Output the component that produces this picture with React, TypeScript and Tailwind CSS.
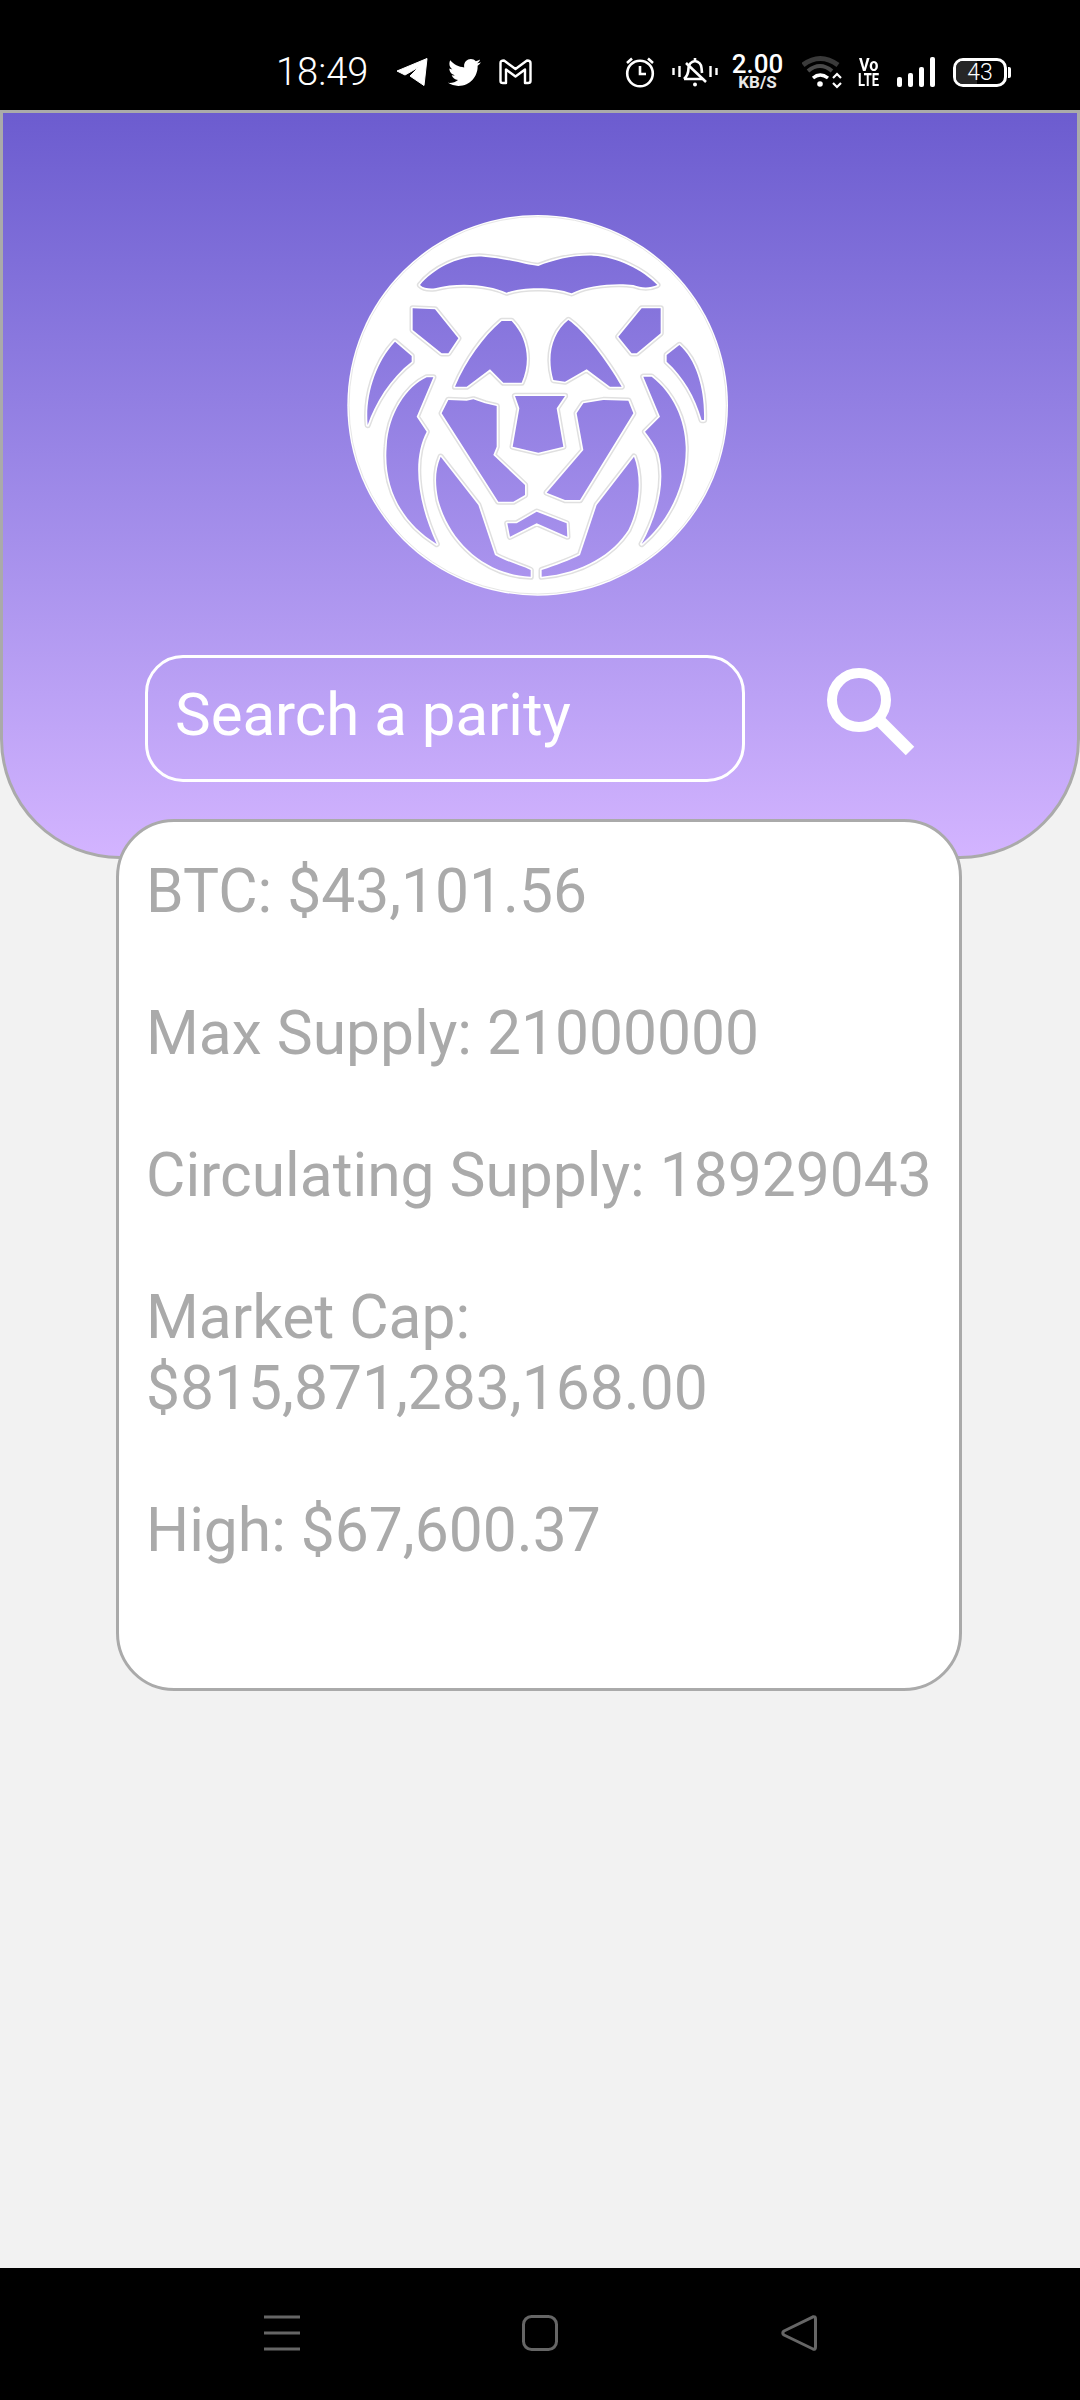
import { FaTwitter } from "react-icons/fa";

const LOGO_HOLES = [
  // brow
  "M300 285 C340 235 420 195 490 200 C560 205 620 225 655 228 C700 210 760 195 820 197 C890 200 970 240 1012 285 C990 295 965 295 940 285 C890 278 800 285 755 310 C700 290 610 290 560 308 C510 285 420 275 345 295 C330 297 310 295 300 285Z",
  // upper ears
  "M278 355 L345 358 L415 445 L385 490 L365 490 L278 420Z",
  "M1022 355 L965 355 L895 440 L935 490 L950 490 L1022 430Z",
  // outer mane
  "M225 455 L275 498 L275 515 C210 565 165 640 143 705 C135 620 165 520 225 455Z",
  "M1078 465 C1130 510 1155 600 1152 690 L1145 690 C1125 620 1090 560 1040 515 L1040 495Z",
  // big mane
  "M320 562 L340 562 L290 680 L320 725 C280 800 285 920 350 1062 C250 1000 190 900 200 770 C205 670 260 590 320 562Z",
  "M970 560 L995 560 C1060 610 1095 690 1097 770 C1100 880 1050 990 965 1062 C1010 980 1040 880 1015 790 C1005 765 990 745 975 725 L1020 680Z",
  // lower mane
  "M362 800 L475 945 L525 1095 C560 1115 600 1125 632 1140 L632 1160 C500 1155 390 1060 355 930 C345 880 345 840 362 800Z",
  "M942 800 C965 860 960 950 925 1020 C880 1090 790 1150 665 1160 L665 1140 C710 1125 750 1110 780 1095 L830 945Z",
  // eyes
  "M545 393 L575 393 C620 440 635 510 605 578 L550 578 L510 538 L440 590 L405 590 C440 510 490 440 545 393Z",
  "M745 390 C790 420 860 510 905 590 L870 590 L800 538 L735 575 L700 570 C680 500 695 430 745 390Z",
  // cheeks
  "M385 630 L440 632 L460 628 L495 640 L530 648 L530 770 L520 795 L615 885 L615 915 L580 935 L535 935 L365 670Z",
  "M940 670 L780 930 L735 930 L680 908 L790 780 L770 670 L790 640 L850 630 L925 632Z",
  // nose
  "M585 618 L735 618 L710 655 L730 770 L655 788 L578 770 L598 655Z",
  // mouth
  "M562 1000 L590 1000 L650 965 L740 1000 L742 1040 L650 1000 L570 1040Z",
];

const Logo = () => {
  const holes = LOGO_HOLES.join(" ");
  return (
    <svg width="440" height="430" viewBox="0 0 1320 1290" className="block mx-auto">
      <defs>
        <mask id="lion-mask">
          <rect width="1320" height="1290" fill="white" />
          <path d={holes} fill="black" />
        </mask>
      </defs>
      <g mask="url(#lion-mask)">
        <circle cx="653" cy="646" r="571" fill="white" />
        <circle cx="653" cy="646" r="566" fill="none" stroke="#e6e6e6" strokeWidth="3" />
        <path d={holes} fill="none" stroke="#e0e0e0" strokeWidth="19" strokeLinejoin="round" />
        <path d={holes} fill="none" stroke="white" strokeWidth="10" strokeLinejoin="round" />
      </g>
    </svg>
  );
};

const StatusBar = () => (
  <div className="h-[110px] bg-black pt-[34px] pl-[276px] flex items-center text-white">
    <span className="w-[91px] text-[38px] leading-none font-light">18:49</span>
    <svg className="ml-[29px]" width="32" height="28" viewBox="0 0 32 28">
      <path d="M1 13 L31 0.5 L28 27.5 L14 18 L23 9 L9 17Z" fill="white" stroke="white" strokeLinejoin="round" />
    </svg>
    <FaTwitter className="ml-[20px] w-[33px] h-[33px]" />
    <svg className="ml-[18px]" width="33" height="26" viewBox="0 0 33 26">
      <path d="M1.5 4 Q1.5 1.5 5 1.5 L16.5 10 L28 1.5 Q31.5 1.5 31.5 4 V22 Q31.5 24 29 24 H26 V10.5 L16.5 17.5 L7 10.5 V24 H4 Q1.5 24 1.5 22Z" fill="none" stroke="white" strokeWidth="2.4" strokeLinejoin="round" />
    </svg>
    <svg className="ml-[93px]" width="30" height="32" viewBox="0 0 30 32">
      <circle cx="15" cy="17.5" r="12.8" fill="none" stroke="white" strokeWidth="2.6" />
      <path d="M15 10 V18 H21" fill="none" stroke="white" strokeWidth="2.6" />
      <path d="M2 7 L7 2.5 M28 7 L23 2.5" stroke="white" strokeWidth="2.6" />
    </svg>
    <svg className="ml-[17px]" width="46" height="32" viewBox="0 0 46 32">
      <path d="M1.5 12 V19 M7.5 10 V21 M38.5 10 V21 M44.5 12 V19" stroke="white" strokeWidth="2.4" />
      <path d="M12 23 Q16.5 19 16.5 12 Q17 6 23 5 Q29 6 29.5 12 L30 17 M12 23 H30 M23 5 V2" fill="none" stroke="white" strokeWidth="2.6" strokeLinejoin="round" />
      <path d="M14 7 L34 26" stroke="white" strokeWidth="2.6" />
      <circle cx="23" cy="28.5" r="2" fill="white" />
    </svg>
    <div className="ml-[14px] w-[51px] flex flex-col items-center">
      <span className="text-[26px] leading-[21px] font-medium">2.00</span>
      <span className="text-[17px] leading-[15px] font-bold text-[#e8e8e8]">KB/S</span>
    </div>
    <svg className="ml-[19px]" width="40" height="34" viewBox="0 0 40 34">
      <path d="M1 10 Q18 -3 36 10" fill="none" stroke="#3a3a3a" strokeWidth="5" />
      <path d="M6 16 Q18 6 30 16" fill="none" stroke="#4a4a4a" strokeWidth="4" />
      <path d="M11 23 Q18 17 26 23" fill="none" stroke="white" strokeWidth="3.4" />
      <circle cx="18" cy="29" r="2.8" fill="white" />
      <path d="M31 23 L35 19 L39 23 M31 28 L35 32 L39 28" fill="none" stroke="white" strokeWidth="2.2" />
    </svg>
    <div className="ml-[15px] w-[23px] flex flex-col items-center font-bold text-[18px] leading-[15px]">
      <span className="scale-x-[0.9]">Vo</span>
      <span className="scale-x-[0.72]">LTE</span>
    </div>
    <div className="ml-[17px] w-[39px] h-[30px] flex items-end gap-[6px]">
      <div className="w-[5px] h-[10px] bg-white rounded-[2px]" />
      <div className="w-[5px] h-[14px] bg-white rounded-[2px]" />
      <div className="w-[5px] h-[20px] bg-white rounded-[2px]" />
      <div className="w-[5px] h-[30px] bg-white rounded-[2px]" />
    </div>
    <div className="ml-[17px] flex items-center gap-[1px]">
      <div className="relative w-[54px] h-[29px] rounded-[10px] border-[3px] border-white overflow-hidden flex items-center justify-center">
        <div className="absolute left-0 top-0 bottom-0 w-[21px] bg-[#262626]" />
        <span className="relative text-[23px] leading-none font-light">43</span>
      </div>
      <div className="w-[3px] h-[11px] bg-white rounded-r-[2px]" />
    </div>
  </div>
);

const Header = () => (
  <div className="h-[749px] border-[3px] border-[#aaaaaa] rounded-b-[120px] bg-linear-to-b from-[#6c5ccf] to-[#d3b4ff] pt-[77px]">
    <div className="-mx-[3px]">
      <Logo />
    </div>
    <div className="flex items-center mt-[35px] pl-[142px]">
      <input
        placeholder="Search a parity"
        className="w-[600px] h-[127px] rounded-[38px] border-[3px] border-white bg-transparent pl-[27px] pb-[8px] text-[60px] text-white placeholder:text-white outline-none"
      />
      <svg className="ml-[82px] -mt-[12px]" width="90" height="90" viewBox="0 0 90 90">
        <circle cx="32" cy="32" r="27" fill="none" stroke="white" strokeWidth="10" />
        <path d="M54 54 L83 83" stroke="white" strokeWidth="12" />
      </svg>
    </div>
  </div>
);

const Card = () => (
  <div className="relative z-10 -mt-[40px] ml-[116px] w-[846px] h-[872px] rounded-[58px] border-[3px] border-[#aaaaaa] bg-white pt-[34px] pl-[27px] pr-[8px] text-[60.5px] leading-[71px] text-[#aaaaaa] flex flex-col gap-[71px]">
    <p>BTC: $43,101.56</p>
    <p>Max Supply: 21000000</p>
    <p>Circulating Supply: 18929043</p>
    <p>Market Cap:<br />$815,871,283,168.00</p>
    <p>High: $67,600.37</p>
  </div>
);

const NavBar = () => (
  <div className="h-[132px] bg-black pt-[47px] pl-[264px] flex items-start">
    <svg width="36" height="36" viewBox="0 0 36 36">
      <path d="M0 2 H36 M0 18 H36 M0 34 H36" stroke="#666666" strokeWidth="3" />
    </svg>
    <svg className="ml-[222px]" width="36" height="36" viewBox="0 0 36 36">
      <rect x="1.5" y="1.5" width="33" height="33" rx="8" fill="none" stroke="#666666" strokeWidth="3" />
    </svg>
    <svg className="ml-[223px]" width="36" height="36" viewBox="0 0 36 36">
      <path d="M32 1.8 Q34.5 1 34.5 4 V32 Q34.5 35 32 34 L3 20 Q0.5 18 3 16Z" fill="none" stroke="#666666" strokeWidth="3" strokeLinejoin="round" />
    </svg>
  </div>
);

export default function App() {
  return (
    <div className="w-[1080px] h-[2400px] flex flex-col bg-[#f2f2f2] font-[Roboto,sans-serif]">
      <StatusBar />
      <div className="flex-1">
        <Header />
        <Card />
      </div>
      <NavBar />
    </div>
  );
}
